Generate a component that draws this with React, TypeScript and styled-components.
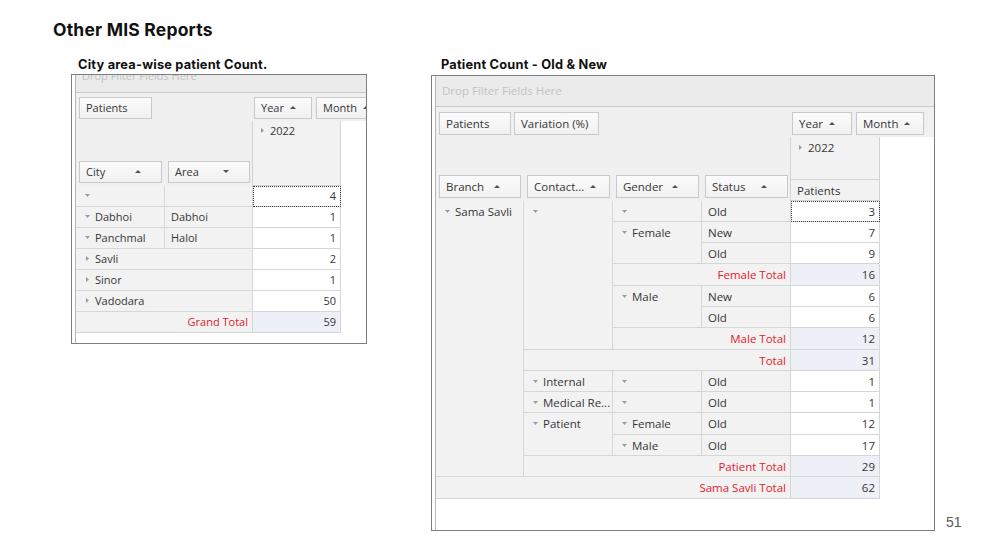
import React from 'react';
import styled, { createGlobalStyle } from 'styled-components';

const GlobalStyle = createGlobalStyle`
  html, body { margin: 0; padding: 0; background: #ffffff; }
  body { font-family: "Open Sans", "Noto Sans", sans-serif; }
`;

type Kind = 'head' | 'headTotal' | 'value' | 'total' | 'sel';
type Dir = 'down' | 'right';

interface CellSpec {
  r: number;
  c: number;
  rs?: number;
  cs?: number;
  text?: string;
  glyph?: Dir;
  kind: Kind;
}

interface FieldSpec {
  label: string;
  w?: number;
  sort?: 'up' | 'down';
}

interface ColHeaderSpec {
  label: string;
  h: number;
  glyph?: Dir;
}

interface PivotSpec {
  width: number;
  height: number;
  font: number;
  rowH: number;
  rowCount: number;
  rowCols: number[];
  valueW: number;
  filterH: number;
  filterShift: number;
  topH: number;
  topPad: number;
  midH: number;
  btnH: number;
  padTop: number;
  dataFields: FieldSpec[];
  colFields: FieldSpec[];
  rowFields: FieldSpec[];
  colHeaders: ColHeaderSpec[];
  cells: CellSpec[];
}

/* ---------- page ---------- */

const Page = styled.div`
  width: 983px;
  height: 551px;
  box-sizing: border-box;
  padding: 21px 0 0 53px;
  overflow: hidden;
  background: #ffffff;
`;

const Title = styled.h1`
  margin: 0;
  font-family: Inter, "Open Sans", sans-serif;
  font-weight: 700;
  font-size: 17.5px;
  line-height: 17.5px;
  letter-spacing: 0.2px;
  color: #111111;
`;

const Columns = styled.div`
  display: flex;
  align-items: flex-start;
  margin: 19px 0 0 18px;
  height: 472px;
`;

const Report = styled.section<{ $w: number; $gapAfter: number }>`
  flex: none;
  width: ${p => p.$w}px;
  margin-right: ${p => p.$gapAfter}px;
  display: flex;
  flex-direction: column;
`;

const ReportTitle = styled.h2<{ $indent: number; $gap: number }>`
  margin: 0 0 ${p => p.$gap}px ${p => p.$indent}px;
  font-family: Inter, "Open Sans", sans-serif;
  font-weight: 700;
  font-size: 12.8px;
  line-height: 13px;
  letter-spacing: 0.2px;
  color: #111111;
  white-space: nowrap;
`;

const PageNumber = styled.div`
  align-self: flex-end;
  margin-left: 11px;
  font-family: "Liberation Sans", Arial, sans-serif;
  font-size: 14px;
  line-height: 16px;
  color: #5a5a5a;
`;

/* ---------- pivot grid ---------- */

const Panel = styled.div<{ $w: number; $h: number }>`
  box-sizing: border-box;
  width: ${p => p.$w}px;
  height: ${p => p.$h}px;
  border: 1px solid #7d7d7d;
  padding-left: 3px;
  background: #ffffff;
  display: flex;
`;

const PanelInner = styled.div<{ $font: number }>`
  flex: 1;
  min-width: 0;
  border-left: 1px solid #b6b6b6;
  display: flex;
  flex-direction: column;
  overflow: hidden;
  font-family: "Open Sans", "Noto Sans", sans-serif;
  font-size: ${p => p.$font}px;
  color: #363636;
`;

const FilterBar = styled.div<{ $h: number }>`
  flex: none;
  box-sizing: border-box;
  height: ${p => p.$h}px;
  border-bottom: 1px solid #c9c9c9;
  background: #ebebeb;
  overflow: hidden;
  padding-left: 6px;
`;

const FilterHint = styled.span<{ $shift: number }>`
  display: block;
  margin-top: ${p => p.$shift}px;
  line-height: 15px;
  color: #c3c3c3;
  white-space: nowrap;
`;

const TopRow = styled.div<{ $h: number; $pad: number; $rowAreaW: number }>`
  flex: none;
  height: ${p => p.$h}px;
  box-sizing: border-box;
  padding-top: ${p => p.$pad}px;
  background: #f0f0f0;
  display: grid;
  grid-template-columns: ${p => p.$rowAreaW}px 1fr;
  align-items: start;
`;

const ButtonGroup = styled.div<{ $gap: number; $inset: number }>`
  display: flex;
  gap: ${p => p.$gap}px;
  padding-left: ${p => p.$inset}px;
  white-space: nowrap;
  min-width: 0;
`;

const FieldButton = styled.div<{ $w: number; $h: number; $spread?: boolean }>`
  flex: none;
  box-sizing: border-box;
  width: ${p => p.$w}px;
  height: ${p => p.$h}px;
  display: flex;
  align-items: center;
  justify-content: ${p => (p.$spread ? 'space-between' : 'flex-start')};
  gap: 6px;
  padding: 0 ${p => (p.$spread ? 20 : 6)}px 0 6px;
  border: 1px solid #c9c9c9;
  background: linear-gradient(#fbfbfb, #f1f1f1);
  color: #363636;
  white-space: nowrap;
  overflow: hidden;
`;

const SortArrow = styled.span<{ $dir: 'up' | 'down' }>`
  flex: none;
  width: 0;
  height: 0;
  border-left: 3px solid transparent;
  border-right: 3px solid transparent;
  ${p =>
    p.$dir === 'up'
      ? 'border-bottom: 3px solid #505050;'
      : 'border-top: 3px solid #505050;'}
`;

const MidRow = styled.div<{ $h: number; $rowAreaW: number; $valueW: number }>`
  flex: none;
  height: ${p => p.$h}px;
  display: grid;
  grid-template-columns: ${p => p.$rowAreaW}px ${p => p.$valueW}px 1fr;
`;

const RowFieldArea = styled.div<{ $cols: string }>`
  background: #f0f0f0;
  display: grid;
  grid-template-columns: ${p => p.$cols};
  align-items: end;
  padding-bottom: 3px;
`;

const RowFieldSlot = styled.div`
  padding: 0 3px;
  display: flex;
`;

const ColHeaderStack = styled.div`
  display: flex;
  flex-direction: column;
  margin-left: -1px;
`;

const ColHeaderCell = styled.div<{ $h: number; $padTop: number }>`
  box-sizing: border-box;
  height: ${p => p.$h}px;
  display: flex;
  align-items: flex-start;
  gap: 5px;
  padding: ${p => p.$padTop}px 4px 0 6px;
  line-height: 15px;
  background: #f2f2f2;
  border-left: 1px solid #d3d3d3;
  border-right: 1px solid #d3d3d3;
  border-bottom: 1px solid #d3d3d3;
  white-space: nowrap;
`;

const BodyGrid = styled.div<{ $cols: string; $rowH: number; $rows: number }>`
  flex: none;
  display: grid;
  width: max-content;
  grid-template-columns: ${p => p.$cols};
  grid-template-rows: repeat(${p => p.$rows}, ${p => p.$rowH}px);
`;

const bgFor = (k: Kind) =>
  k === 'total' ? '#edf0f6' : k === 'value' || k === 'sel' ? '#ffffff' : '#f2f2f2';

const Cell = styled.div<{
  $kind: Kind;
  $r: number;
  $c: number;
  $rs: number;
  $cs: number;
  $padTop: number;
  $glyph: boolean;
}>`
  grid-row: ${p => p.$r} / span ${p => p.$rs};
  grid-column: ${p => p.$c} / span ${p => p.$cs};
  box-sizing: border-box;
  min-width: 0;
  display: flex;
  align-items: flex-start;
  justify-content: ${p => (p.$kind === 'head' ? 'flex-start' : 'flex-end')};
  gap: 5px;
  padding: ${p => p.$padTop}px 4px 0 ${p => (p.$glyph ? 8 : 6)}px;
  line-height: 15px;
  white-space: nowrap;
  overflow: hidden;
  background: ${p => bgFor(p.$kind)};
  color: ${p => (p.$kind === 'headTotal' ? '#e3202b' : '#363636')};
  border-right: 1px solid #d6d6d6;
  border-bottom: 1px solid #d6d6d6;
  ${p => (p.$kind === 'sel' ? 'outline: 1px dotted #3c3c3c; outline-offset: -1px;' : '')}
`;

const GlyphBox = styled.span`
  flex: none;
  width: 6px;
  height: 15px;
  display: flex;
  align-items: center;
  justify-content: center;
`;

function Glyph({ dir }: { dir: Dir }) {
  return (
    <GlyphBox>
      {dir === 'down' ? (
        <svg width="5" height="3" viewBox="0 0 5 3">
          <path d="M0 0H5L2.5 3Z" fill="#9b9b9b" />
        </svg>
      ) : (
        <svg width="3" height="5" viewBox="0 0 3 5">
          <path d="M0 0L3 2.5L0 5Z" fill="#9b9b9b" />
        </svg>
      )}
    </GlyphBox>
  );
}

function Pivot({ spec }: { spec: PivotSpec }) {
  const rowAreaW = spec.rowCols.reduce((a, b) => a + b, 0);
  const rowTemplate = spec.rowCols.map(w => `${w}px`).join(' ');
  return (
    <Panel $w={spec.width} $h={spec.height}>
      <PanelInner $font={spec.font}>
        <FilterBar $h={spec.filterH}>
          <FilterHint $shift={spec.filterShift}>Drop Filter Fields Here</FilterHint>
        </FilterBar>
        <TopRow $h={spec.topH} $pad={spec.topPad} $rowAreaW={rowAreaW}>
          <ButtonGroup $gap={3} $inset={3}>
            {spec.dataFields.map(f => (
              <FieldButton key={f.label} $w={f.w ?? 72} $h={spec.btnH}>
                {f.label}
              </FieldButton>
            ))}
          </ButtonGroup>
          <ButtonGroup $gap={4} $inset={1}>
            {spec.colFields.map(f => (
              <FieldButton key={f.label} $w={f.w ?? 60} $h={spec.btnH}>
                {f.label}
                <SortArrow $dir={f.sort ?? 'up'} />
              </FieldButton>
            ))}
          </ButtonGroup>
        </TopRow>
        <MidRow $h={spec.midH} $rowAreaW={rowAreaW} $valueW={spec.valueW}>
          <RowFieldArea $cols={rowTemplate}>
            {spec.rowFields.map((f, i) => (
              <RowFieldSlot key={f.label}>
                <FieldButton $w={spec.rowCols[i] - 6} $h={spec.btnH} $spread>
                  {f.label}
                  <SortArrow $dir={f.sort ?? 'up'} />
                </FieldButton>
              </RowFieldSlot>
            ))}
          </RowFieldArea>
          <ColHeaderStack>
            {spec.colHeaders.map(h => (
              <ColHeaderCell key={h.label} $h={h.h} $padTop={spec.padTop}>
                {h.glyph && <Glyph dir={h.glyph} />}
                {h.label}
              </ColHeaderCell>
            ))}
          </ColHeaderStack>
          <div />
        </MidRow>
        <BodyGrid
          $cols={`${rowTemplate} ${spec.valueW}px`}
          $rowH={spec.rowH}
          $rows={spec.rowCount}
        >
          {spec.cells.map(c => (
            <Cell
              key={`${c.r}-${c.c}`}
              $kind={c.kind}
              $r={c.r}
              $c={c.c}
              $rs={c.rs ?? 1}
              $cs={c.cs ?? 1}
              $padTop={spec.padTop}
              $glyph={!!c.glyph}
            >
              {c.glyph && <Glyph dir={c.glyph} />}
              {c.text}
            </Cell>
          ))}
        </BodyGrid>
      </PanelInner>
    </Panel>
  );
}

/* ---------- data ---------- */

const cityPivot: PivotSpec = {
  width: 296,
  height: 270,
  font: 11,
  rowH: 21,
  rowCount: 7,
  rowCols: [89, 88],
  valueW: 88,
  filterH: 18,
  filterShift: -7,
  topH: 28,
  topPad: 4,
  midH: 65,
  btnH: 22,
  padTop: 2,
  dataFields: [{ label: 'Patients', w: 73 }],
  colFields: [
    { label: 'Year', w: 58, sort: 'up' },
    { label: 'Month', w: 62, sort: 'up' },
  ],
  rowFields: [
    { label: 'City', sort: 'up' },
    { label: 'Area', sort: 'down' },
  ],
  colHeaders: [{ label: '2022', h: 65, glyph: 'right' }],
  cells: [
    { r: 1, c: 1, kind: 'head', glyph: 'down' },
    { r: 1, c: 2, kind: 'head' },
    { r: 1, c: 3, kind: 'sel', text: '4' },
    { r: 2, c: 1, kind: 'head', glyph: 'down', text: 'Dabhoi' },
    { r: 2, c: 2, kind: 'head', text: 'Dabhoi' },
    { r: 2, c: 3, kind: 'value', text: '1' },
    { r: 3, c: 1, kind: 'head', glyph: 'down', text: 'Panchmal' },
    { r: 3, c: 2, kind: 'head', text: 'Halol' },
    { r: 3, c: 3, kind: 'value', text: '1' },
    { r: 4, c: 1, cs: 2, kind: 'head', glyph: 'right', text: 'Savli' },
    { r: 4, c: 3, kind: 'value', text: '2' },
    { r: 5, c: 1, cs: 2, kind: 'head', glyph: 'right', text: 'Sinor' },
    { r: 5, c: 3, kind: 'value', text: '1' },
    { r: 6, c: 1, cs: 2, kind: 'head', glyph: 'right', text: 'Vadodara' },
    { r: 6, c: 3, kind: 'value', text: '50' },
    { r: 7, c: 1, cs: 2, kind: 'headTotal', text: 'Grand Total' },
    { r: 7, c: 3, kind: 'total', text: '59' },
  ],
};

const statusPivot: PivotSpec = {
  width: 504,
  height: 456,
  font: 11.5,
  rowH: 21.3,
  rowCount: 14,
  rowCols: [88, 89, 89, 89],
  valueW: 89,
  filterH: 31,
  filterShift: 7,
  topH: 30,
  topPad: 5,
  midH: 64,
  btnH: 23,
  padTop: 3,
  dataFields: [
    { label: 'Patients', w: 72 },
    { label: 'Variation (%)', w: 85 },
  ],
  colFields: [
    { label: 'Year', w: 60, sort: 'up' },
    { label: 'Month', w: 68, sort: 'up' },
  ],
  rowFields: [
    { label: 'Branch', sort: 'up' },
    { label: 'Contact...', sort: 'up' },
    { label: 'Gender', sort: 'up' },
    { label: 'Status', sort: 'up' },
  ],
  colHeaders: [
    { label: '2022', h: 43, glyph: 'right' },
    { label: 'Patients', h: 21 },
  ],
  cells: [
    { r: 1, c: 1, rs: 13, kind: 'head', glyph: 'down', text: 'Sama Savli' },
    { r: 1, c: 2, rs: 7, kind: 'head', glyph: 'down' },
    { r: 1, c: 3, kind: 'head', glyph: 'down' },
    { r: 1, c: 4, kind: 'head', text: 'Old' },
    { r: 1, c: 5, kind: 'sel', text: '3' },
    { r: 2, c: 3, rs: 2, kind: 'head', glyph: 'down', text: 'Female' },
    { r: 2, c: 4, kind: 'head', text: 'New' },
    { r: 2, c: 5, kind: 'value', text: '7' },
    { r: 3, c: 4, kind: 'head', text: 'Old' },
    { r: 3, c: 5, kind: 'value', text: '9' },
    { r: 4, c: 3, cs: 2, kind: 'headTotal', text: 'Female Total' },
    { r: 4, c: 5, kind: 'total', text: '16' },
    { r: 5, c: 3, rs: 2, kind: 'head', glyph: 'down', text: 'Male' },
    { r: 5, c: 4, kind: 'head', text: 'New' },
    { r: 5, c: 5, kind: 'value', text: '6' },
    { r: 6, c: 4, kind: 'head', text: 'Old' },
    { r: 6, c: 5, kind: 'value', text: '6' },
    { r: 7, c: 3, cs: 2, kind: 'headTotal', text: 'Male Total' },
    { r: 7, c: 5, kind: 'total', text: '12' },
    { r: 8, c: 2, cs: 3, kind: 'headTotal', text: 'Total' },
    { r: 8, c: 5, kind: 'total', text: '31' },
    { r: 9, c: 2, kind: 'head', glyph: 'down', text: 'Internal' },
    { r: 9, c: 3, kind: 'head', glyph: 'down' },
    { r: 9, c: 4, kind: 'head', text: 'Old' },
    { r: 9, c: 5, kind: 'value', text: '1' },
    { r: 10, c: 2, kind: 'head', glyph: 'down', text: 'Medical Re...' },
    { r: 10, c: 3, kind: 'head', glyph: 'down' },
    { r: 10, c: 4, kind: 'head', text: 'Old' },
    { r: 10, c: 5, kind: 'value', text: '1' },
    { r: 11, c: 2, rs: 2, kind: 'head', glyph: 'down', text: 'Patient' },
    { r: 11, c: 3, kind: 'head', glyph: 'down', text: 'Female' },
    { r: 11, c: 4, kind: 'head', text: 'Old' },
    { r: 11, c: 5, kind: 'value', text: '12' },
    { r: 12, c: 3, kind: 'head', glyph: 'down', text: 'Male' },
    { r: 12, c: 4, kind: 'head', text: 'Old' },
    { r: 12, c: 5, kind: 'value', text: '17' },
    { r: 13, c: 2, cs: 3, kind: 'headTotal', text: 'Patient Total' },
    { r: 13, c: 5, kind: 'total', text: '29' },
    { r: 14, c: 1, cs: 4, kind: 'headTotal', text: 'Sama Savli Total' },
    { r: 14, c: 5, kind: 'total', text: '62' },
  ],
};

export default function App() {
  return (
    <>
      <GlobalStyle />
      <Page>
        <Title>Other MIS Reports</Title>
        <Columns>
          <Report $w={296} $gapAfter={64}>
            <ReportTitle $indent={7} $gap={3}>City area-wise patient Count.</ReportTitle>
            <Pivot spec={cityPivot} />
          </Report>
          <Report $w={504} $gapAfter={0}>
            <ReportTitle $indent={10} $gap={4}>Patient Count - Old &amp; New</ReportTitle>
            <Pivot spec={statusPivot} />
          </Report>
          <PageNumber>51</PageNumber>
        </Columns>
      </Page>
    </>
  );
}
